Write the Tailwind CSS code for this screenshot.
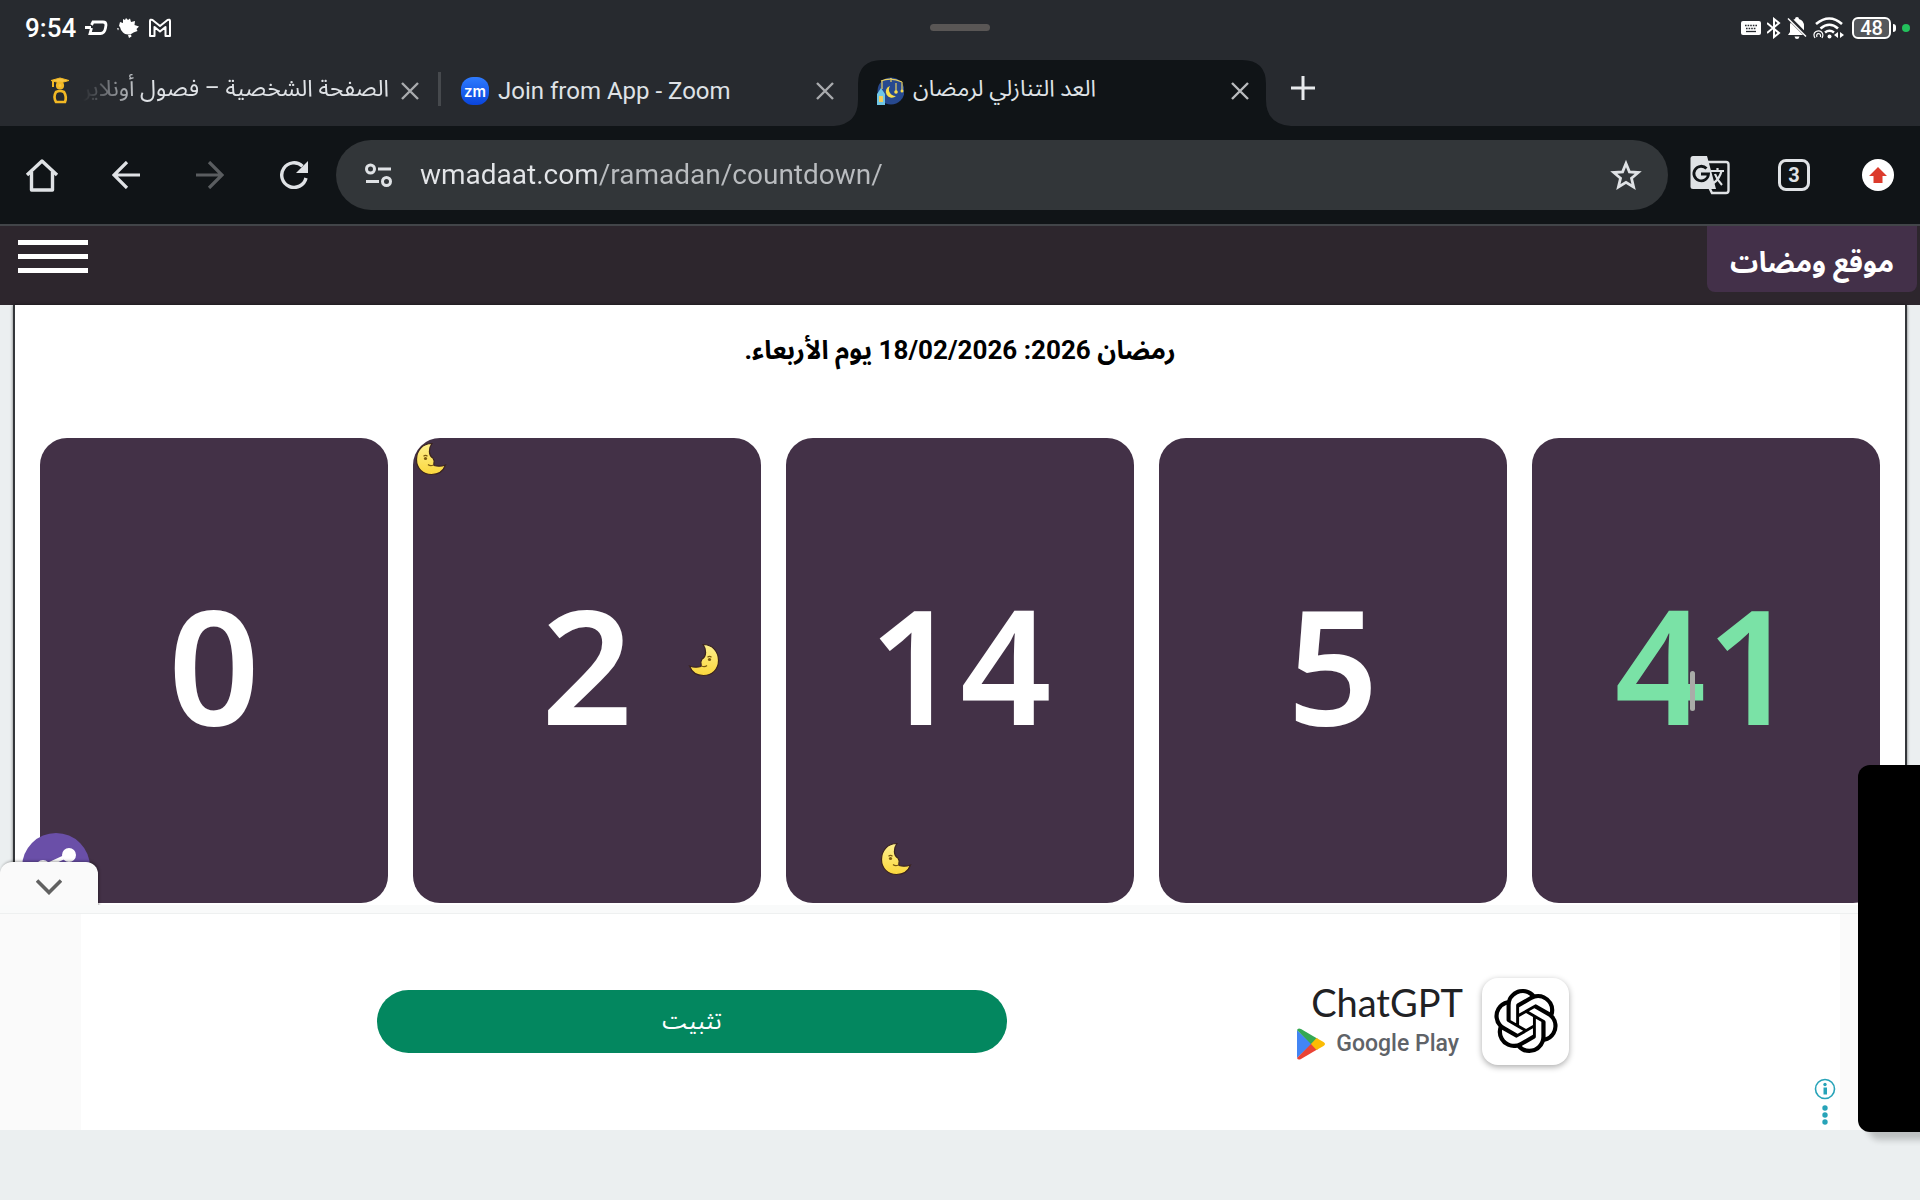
<!DOCTYPE html>
<html lang="ar">
    <head>
        <meta charset="UTF-8">
        <meta name="viewport" content="width=device-width, initial-scale=1.0">
        <title>العد التنازلي لرمضان</title>
        <script src="https://cdn.jsdelivr.net/npm/@tailwindcss/browser@4"></script>
    </head>
    <body class="h-screen flex flex-col overflow-hidden bg-[#ebeff0] font-['Roboto','Noto_Sans_Arabic','DejaVu_Sans',sans-serif]">
        <!-- Shared moon drawing -->
        <svg class="absolute h-0 w-0">
            <defs>
                <linearGradient id="moonFill" x1="0" y1="0" x2="0" y2="1">
                    <stop offset="0" stop-color="#fdf08f"/>
                    <stop offset="1" stop-color="#fbd73c"/>
                </linearGradient>
                <symbol id="moon" viewBox="0 0 32 34">
                    <path d="M17 1.500C7 1.500 1.500 9 1.500 17.500c0 9 6.500 15 15 15 7 0 12-4 14-9.500-4 1.500-8 1.500-11.500.5-.8-1 .5-1.500-.2-2.500 1-.8 0-1.500.3-2.300l-1-2.400c-5-3-4.500-10.500-1.100-14.800z" fill="url(#moonFill)" stroke="#3a2320" stroke-width="1.200"/>
                    <circle cx="10.500" cy="16.500" r="1.600" fill="#7a5a10"/>
                    <path d="M8.500 14.200q2-1.500 4 0M13 22.500q2 1.800 5 .8" fill="none" stroke="#7a5a10" stroke-width="1.200"/>
                </symbol>
            </defs>
        </svg>

        <!-- Status Bar -->
        <div class="relative flex h-[56px] shrink-0 items-center justify-between bg-[#272a2f] pl-[25px] pr-[10px] text-white">
            <div class="flex items-center gap-2">
                <span class="text-[26px] font-medium leading-none">9:54</span>
                <svg class="h-4 w-6" viewBox="0 0 24 16" fill="none" stroke="currentColor" stroke-width="2.800">
                    <path d="M1 7.500h6M7.500 5 9 2h10q3 0 3 3l-.5 3q-1 5.500-5 5.500H6L7.500 8"/>
                </svg>
                <svg class="h-6 w-6" viewBox="0 0 24 24" fill="currentColor">
                    <path d="M10 2l2 2 2-1.500L15 6l4-1-.5 4 4.500 1.500-2.500 2.500 1 2-4 1.500C15 19 9 19 7 16.500L5 14l-1-3-1-1 1-4 3 1V3l2 1zM12 19l3-.5.500 2-2.500 1.500zM1 12l2 .5-1 2z"/>
                </svg>
                <svg class="h-5 w-6" viewBox="0 0 24 20" fill="none" stroke="currentColor" stroke-width="2" stroke-linejoin="round">
                    <path d="M2 18V3q0-2 2.500-1L12 8l7.500-6Q22 1 22 3v15h-4.500V9L12 13.500 6.500 9v9z"/>
                </svg>
            </div>
            <div class="absolute left-1/2 top-6 h-[7px] w-[60px] -translate-x-1/2 rounded-full bg-[#595655]"></div>
            <div class="flex items-center gap-[6px]">
                <svg class="h-[14px] w-5" viewBox="0 0 20 14">
                    <rect width="20" height="14" rx="2" fill="#fff"/>
                    <path d="M4 4.500h12M5 7.500h10" stroke="#272a2f" stroke-width="1.600" stroke-dasharray="1.600 1"/>
                    <path d="M5 10.500h10" stroke="#272a2f" stroke-width="1.300"/>
                </svg>
                <svg class="h-[22px] w-[14px]" viewBox="0 0 14 22" fill="none" stroke="currentColor" stroke-width="2">
                    <path d="M0 6l12 10-5 4V2l5 4L0 16"/>
                </svg>
                <svg class="h-[22px] w-5" viewBox="0 0 20 22">
                    <path d="M10 0q2 0 2 2 5 1.500 5 7v6l2 3H1l2-3V9q0-5.500 5-7 0-2 2-2zM7.500 19.500h5q-.5 2.500-2.500 2.500t-2.500-2.500z" fill="#fff"/>
                    <path d="M2 1l18 18" stroke="#272a2f" stroke-width="4"/>
                    <path d="M1 1.500l18 18" stroke="#fff" stroke-width="1.500"/>
                </svg>
                <svg class="h-[22px] w-[31px]" viewBox="0 0 31 22" fill="none" stroke="#fff">
                    <path d="M3 7q13.500-11 26 0M7.500 11.500q9-7.500 17.500 0M12 15.500q4.500-3.500 9 0" stroke-width="2.600"/>
                    <circle cx="16.500" cy="19.500" r="2" fill="#fff" stroke="none"/>
                    <path d="M2 21q-2.500-4.500 1-6.500 3-1.500 5.500.5 2.500 2.500.5 6M4 20q-1-2.500 1-3.500 3 0 2.500 3.500" stroke-width="1.200"/>
                    <path d="M25 15v6l-4-3zM27 15v6l4-3z" fill="#fff" stroke="none"/>
                </svg>
                <div class="ml-[2px] flex items-center gap-[2px]">
                    <div class="flex h-[22px] w-[39px] items-center justify-center rounded-md border-2 border-white bg-[#55585c] text-[20px] font-medium leading-none">48</div>
                    <div class="h-2 w-[3px] rounded-r bg-white"></div>
                </div>
                <div class="h-2 w-2 rounded-full bg-[#23c15c]"></div>
            </div>
        </div>

        <!-- Tab Strip -->
        <div class="flex h-[70px] shrink-0 items-end bg-[#272a2f] pl-[26px] text-[24px] text-[#dfe2e6]">
            <div class="flex h-[66px] w-[415px] items-center gap-[9px] pb-1 pl-[20px] pr-[19px]">
                <svg class="h-7 w-7 shrink-0" viewBox="0 0 28 28" fill="none" stroke="#f2b824" stroke-width="2.600">
                    <path d="M5 3.500 14 1l9 2.500L14 6z" fill="#f7c544" stroke-width="1"/>
                    <path d="M7 4v6" stroke-width="2"/>
                    <circle cx="14" cy="8.500" r="2.800" fill="#f7c544"/>
                    <path d="M10 15q4-2 8 0 3 5 1 10h-9q-3-5 0-10z"/>
                </svg>
                <span dir="rtl" class="min-w-0 flex-1 overflow-hidden whitespace-nowrap pb-1 text-[23px] mask-l-from-80% mask-l-to-100%">الصفحة الشخصية – فصول أونلاين</span>
                <button aria-label="Close tab" class="shrink-0 text-[#a9abae]">
                    <svg class="h-6 w-6" viewBox="0 0 24 24" fill="none" stroke="currentColor" stroke-width="2.400"><path d="M4 4l16 16M20 4 4 20"/></svg>
                </button>
            </div>
            <div class="relative flex h-[66px] w-[415px] items-center gap-[9px] pb-1 pl-[20px] pr-[19px]">
                <div class="absolute -left-[3px] top-3 h-[34px] w-[3px] bg-[#46494d]"></div>
                <div class="flex h-7 w-7 shrink-0 items-center justify-center rounded-xl bg-linear-to-b from-[#2f7bff] to-[#0a44dc] font-['Inter'] text-[15px] font-semibold leading-none text-white">zm</div>
                <span class="min-w-0 flex-1 whitespace-nowrap">Join from App - Zoom</span>
                <button aria-label="Close tab" class="shrink-0 text-[#a9abae]">
                    <svg class="h-6 w-6" viewBox="0 0 24 24" fill="none" stroke="currentColor" stroke-width="2.400"><path d="M4 4l16 16M20 4 4 20"/></svg>
                </button>
            </div>
            <div class="relative flex h-[66px] w-[415px] items-center gap-[9px] pb-1 pl-[20px] pr-[19px]">
                <!-- Active tab shape, flares out at the foot -->
                <svg class="absolute -left-[22px] top-0 h-[66px] w-[457px]" viewBox="0 0 457 66" fill="#101417">
                    <path d="M0 66q24-2 24-26V24Q24 0 48 0h360q24 0 24 24v16q0 24 25 26z"/>
                </svg>
                <svg class="relative h-7 w-7 shrink-0" viewBox="0 0 28 28">
                    <circle cx="15" cy="14" r="13.500" fill="#27498f"/>
                    <path d="M14 9a6 6 0 1 0 6 10 6.500 6.500 0 0 1-6-10z" fill="#f8dc4c"/>
                    <path d="M5 4q10-4 21 1M6 3v9M15 1v4M26 5v9M20 6v8" fill="none" stroke="#e8cf62" stroke-width="1.200"/>
                    <circle cx="20" cy="15" r="1.800" fill="#f8dc4c"/>
                    <circle cx="26" cy="14" r="1.500" fill="#f8dc4c"/>
                    <path d="M1 28V17l4-6 4 6v11z" fill="#6fc6e6"/>
                    <path d="M3 19h4v6H3z" fill="#f2cd5c"/>
                </svg>
                <span dir="rtl" class="relative whitespace-nowrap pb-1 text-[23px]">العد التنازلي لرمضان</span>
                <button aria-label="Close tab" class="relative ml-auto shrink-0 text-[#b9bbbe]">
                    <svg class="h-6 w-6" viewBox="0 0 24 24" fill="none" stroke="currentColor" stroke-width="2.400"><path d="M4 4l16 16M20 4 4 20"/></svg>
                </button>
            </div>
            <button aria-label="New tab" class="mb-[26px] ml-[20px] text-[#e8eaed]">
                <svg class="h-6 w-6" viewBox="0 0 24 24" stroke="currentColor" stroke-width="3"><path d="M12 0v24M0 12h24"/></svg>
            </button>
        </div>

        <!-- Browser Toolbar -->
        <div class="flex h-[100px] shrink-0 items-center border-b-2 border-[#424549] bg-[#101417] text-[#dfe2e5]">
            <button aria-label="Home" class="flex w-[84px] justify-center">
                <svg class="h-9 w-9" viewBox="0 0 36 36" fill="none" stroke="currentColor" stroke-width="3.400" stroke-linejoin="round">
                    <path d="M3 18 18 4l15 14M7.500 15v18h21V15"/>
                </svg>
            </button>
            <button aria-label="Back" class="flex w-[84px] justify-center">
                <svg class="h-7 w-7" viewBox="0 0 28 28" fill="none" stroke="currentColor" stroke-width="3.200"><path d="M28 14H2M15 1 2 14l13 13"/></svg>
            </button>
            <button aria-label="Forward" class="flex w-[84px] justify-center text-[#5a5d60]">
                <svg class="h-7 w-7" viewBox="0 0 28 28" fill="none" stroke="currentColor" stroke-width="3.200"><path d="M0 14h26M13 1l13 13-13 13"/></svg>
            </button>
            <button aria-label="Reload" class="flex w-[84px] justify-center">
                <svg class="h-7 w-7" viewBox="0 0 28 28">
                    <path d="M26 17A12.300 12.300 0 1 1 22.500 5.200" fill="none" stroke="currentColor" stroke-width="3.400"/>
                    <path d="M28 0v12H16z" fill="currentColor"/>
                </svg>
            </button>
            <div class="flex h-[70px] flex-1 items-center rounded-full bg-[#323639] pl-[29px] pr-[26px]">
                <svg class="h-6 w-7 shrink-0" viewBox="0 0 28 24" fill="none" stroke="currentColor" stroke-width="3">
                    <circle cx="5.500" cy="6" r="4"/><path d="M13 6h13M1 18.500h13"/><circle cx="21.500" cy="18.500" r="4"/>
                </svg>
                <input aria-label="Address" type="text" dir="ltr" value="wmadaat.com/ramadan/countdown/" class="ml-[27px] min-w-0 flex-1 bg-[linear-gradient(90deg,#e3e5e8_176px,#b9bcbf_176px)] bg-clip-text text-[28px] text-transparent outline-none">
                <button aria-label="Bookmark">
                    <svg class="h-8 w-8" viewBox="0 0 32 32" fill="none" stroke="currentColor" stroke-width="2.800">
                        <path d="M16 4.500l3.400 8.300 8.900.7-6.800 5.800 2.100 8.700-7.600-4.700L8.400 28l2.100-8.700-6.800-5.800 8.900-.7z"/>
                    </svg>
                </button>
            </div>
            <button aria-label="Translate" class="flex w-[84px] justify-center">
                <svg class="h-10 w-10" viewBox="0 0 40 40">
                    <path d="M18 7h18q2.500 0 2.500 2.500v26Q38.500 38 36 38H22l-4-8" fill="none" stroke="currentColor" stroke-width="2.400"/>
                    <path d="M3 1h14l9 33H3q-2.500 0-2.500-2.500v-28Q.5 1 3 1z" fill="currentColor"/>
                    <path d="M16.500 13.500A7.300 7.300 0 1 0 18.500 19H11" fill="none" stroke="#101417" stroke-width="2.800"/>
                    <path d="M21 16h13M27.500 13v3M31.500 16q-2 8-8 12M25 19q2 6 7 11" fill="none" stroke="currentColor" stroke-width="2.200"/>
                </svg>
            </button>
            <button aria-label="Open tabs" class="flex w-[84px] justify-center">
                <span class="flex h-8 w-8 items-center justify-center rounded-lg border-3 border-current text-[20px] font-bold leading-none">3</span>
            </button>
            <button aria-label="Update" class="flex w-[84px] justify-center">
                <svg class="h-8 w-8" viewBox="0 0 32 32">
                    <circle cx="16" cy="16" r="16" fill="#fff"/>
                    <path d="M16 8l9 9h-4.500v7h-9v-7H7z" fill="#dc3b2c"/>
                </svg>
            </button>
        </div>

        <!-- Site Header -->
        <header class="flex h-[79px] shrink-0 items-start justify-between bg-[#2d262d] pl-[18px] pr-[3px]">
            <button aria-label="القائمة" class="mt-[14px] flex w-[70px] flex-col gap-[9px]">
                <span class="h-[5px] w-full bg-white"></span>
                <span class="h-[5px] w-full bg-white"></span>
                <span class="h-[5px] w-full bg-white"></span>
            </button>
            <a href="#" dir="rtl" class="flex h-[66px] w-[210px] items-center justify-center rounded-b-lg bg-[#433049] pt-2 text-[28px] font-bold text-white">موقع ومضات</a>
        </header>

        <!-- Countdown -->
        <main class="relative mx-[13px] flex min-h-0 flex-1 flex-col border-x-2 border-[#34373a] bg-white px-[25px] shadow-[0_0_3px_#0008]">
            <h1 dir="rtl" class="flex h-[133px] items-center justify-center pb-[42px] text-[26px] font-bold text-black">رمضان 2026: 18/02/2026 يوم الأربعاء.</h1>
            <div class="grid flex-1 grid-cols-5 gap-[25px] pb-[2px] font-['Liberation_Sans_Narrow','Noto_Sans',sans-serif] text-[160px] font-semibold leading-none text-white">
                <div class="flex items-center justify-center rounded-[27px] bg-[#433147] pb-4">0</div>
                <div class="relative flex items-center justify-center rounded-[27px] bg-[#433147] pb-4">
                    2
                    <svg class="absolute left-[2px] top-1 h-[34px] w-8"><use href="#moon"/></svg>
                    <svg class="absolute left-[275px] top-[205px] h-[34px] w-8 -scale-x-100"><use href="#moon"/></svg>
                </div>
                <div class="relative flex items-center justify-center rounded-[27px] bg-[#433147] pb-4">
                    14
                    <svg class="absolute bottom-[27px] left-[94px] h-[34px] w-8"><use href="#moon"/></svg>
                </div>
                <div class="flex items-center justify-center rounded-[27px] bg-[#433147] pb-4">5</div>
                <div class="relative flex items-center justify-center rounded-[27px] bg-[#433147] pb-4 text-[#7ae2a6]">
                    41
                    <div class="absolute left-[158px] top-[233px] h-10 w-[5px] rounded-full bg-[#a9aca8]"></div>
                </div>
            </div>
            <!-- Share -->
            <button aria-label="مشاركة" class="absolute -bottom-1 left-[7px] flex h-[76px] w-[68px] items-start justify-center overflow-hidden">
                <svg class="h-[68px] w-[68px]" viewBox="0 0 68 68" fill="none" stroke="#fff" stroke-width="4">
                    <circle cx="34" cy="34" r="34" fill="#6a4fa8" stroke="none"/>
                    <path d="M47 22 21 34l26 12"/>
                    <circle cx="47" cy="22" r="5" fill="#fff"/><circle cx="21" cy="34" r="5" fill="#fff"/><circle cx="47" cy="46" r="5" fill="#fff"/>
                </svg>
            </button>
        </main>

        <!-- Anchor Ad -->
        <aside class="relative h-[225px] shrink-0 bg-[#fafafa]">
            <button aria-label="إخفاء الإعلان" class="absolute -top-[43px] left-0 flex h-[46px] w-[98px] items-center justify-center rounded-t-xl bg-[#fafafa] pt-1 text-[#616161] shadow-[1px_-1px_3px_#0005] [clip-path:inset(-4px_-4px_3px_0)]">
                <svg class="h-4 w-[26px]" viewBox="0 0 26 16" fill="none" stroke="currentColor" stroke-width="3.600"><path d="M1 1.500 13 13.500l12-12"/></svg>
            </button>
            <div class="h-[9px] border-b border-[#eef0f0] bg-[#f9fafa]"></div>
            <div class="relative ml-[81px] mr-[80px] flex h-[216px] items-center justify-between bg-white pb-[2px] pl-[296px] pr-[271px]">
                <button class="h-[63px] w-[630px] rounded-full bg-[#03875f] text-[24px] text-white">تثبيت</button>
                <div class="flex items-center gap-[19px]">
                    <div class="flex flex-col items-end">
                        <span class="mb-[6px] text-[38px] leading-[40px] text-[#202124] font-['Lato']">ChatGPT</span>
                        <div class="flex items-center gap-[10px] pr-1">
                            <svg class="h-8 w-[30px]" viewBox="0 0 30 32">
                                <path d="M1 2v28l15-14z" fill="#4285f4"/>
                                <path d="M1 2Q2-.5 5 1l17 10-6 6z" fill="#34a853"/>
                                <path d="M1 30q1 2.500 4 1l17-10-6-6z" fill="#ea4335"/>
                                <path d="M20.500 10l7 4q3 2 0 4l-7 4-5.500-6z" fill="#fbbc04"/>
                            </svg>
                            <span class="text-[23px] font-medium leading-8 text-[#5f6368]">Google Play</span>
                        </div>
                    </div>
                    <div class="flex h-[87px] w-[87px] items-center justify-center rounded-2xl bg-white shadow-[0_2px_6px_#0005]">
                        <svg class="h-16 w-16" viewBox="0 0 24 24" fill="#000">
                            <path d="M22.2819 9.8211a5.9847 5.9847 0 0 0-.5157-4.9108 6.0462 6.0462 0 0 0-6.5098-2.9A6.0651 6.0651 0 0 0 4.9807 4.1818a5.9847 5.9847 0 0 0-3.9977 2.9 6.0462 6.0462 0 0 0 .7427 7.0966 5.98 5.98 0 0 0 .511 4.9107 6.051 6.051 0 0 0 6.5146 2.9001A5.9847 5.9847 0 0 0 13.2599 24a6.0557 6.0557 0 0 0 5.7718-4.2058 5.9894 5.9894 0 0 0 3.9977-2.9001 6.0557 6.0557 0 0 0-.7475-7.0729zm-9.022 12.6081a4.4755 4.4755 0 0 1-2.8764-1.0408l.1419-.0804 4.7783-2.7582a.7948.7948 0 0 0 .3927-.6813v-6.7369l2.02 1.1686a.071.071 0 0 1 .038.052v5.5826a4.504 4.504 0 0 1-4.4945 4.4944zm-9.6607-4.1254a4.4708 4.4708 0 0 1-.5346-3.0137l.142.0852 4.783 2.7582a.7712.7712 0 0 0 .7806 0l5.8428-3.3685v2.3324a.0804.0804 0 0 1-.0332.0615L9.74 19.9502a4.4992 4.4992 0 0 1-6.1408-1.6464zM2.3408 7.8956a4.485 4.485 0 0 1 2.3655-1.9728V11.6a.7664.7664 0 0 0 .3879.6765l5.8144 3.3543-2.0201 1.1685a.0757.0757 0 0 1-.071 0l-4.8303-2.7865A4.504 4.504 0 0 1 2.3408 7.872zm16.5963 3.8558L13.1038 8.364 15.1192 7.2a.0757.0757 0 0 1 .071 0l4.8303 2.7913a4.4944 4.4944 0 0 1-.6765 8.1042v-5.6772a.79.79 0 0 0-.407-.667zm2.0107-3.0231l-.142-.0852-4.7735-2.7818a.7759.7759 0 0 0-.7854 0L9.409 9.2297V6.8974a.0662.0662 0 0 1 .0284-.0615l4.8303-2.7866a4.4992 4.4992 0 0 1 6.6802 4.66zM8.3065 12.863l-2.02-1.1638a.0804.0804 0 0 1-.038-.0567V6.0742a4.4992 4.4992 0 0 1 7.3757-3.4537l-.142.0805L8.704 5.459a.7948.7948 0 0 0-.3927.6813zm1.0976-2.3654l2.602-1.4998 2.6069 1.4998v2.9994l-2.5974 1.4997-2.6067-1.4997Z"/>
                        </svg>
                    </div>
                </div>
                <button aria-label="خيارات الإعلان" class="absolute bottom-1 right-1">
                    <svg class="h-12 w-[22px]" viewBox="0 0 22 48" fill="#27a3b8">
                        <circle cx="11" cy="11" r="9.500" fill="none" stroke="#27a3b8" stroke-width="1.600"/>
                        <circle cx="11" cy="6.500" r="1.700"/><path d="M9.500 9.500h3.500v7H9.500z"/>
                        <circle cx="11" cy="30" r="2.700"/><circle cx="11" cy="37" r="2.700"/><circle cx="11" cy="44" r="2.700"/>
                    </svg>
                </button>
            </div>
        </aside>
        <footer class="h-[70px] shrink-0 bg-[#ebeff0]"></footer>

        <!-- Floating side panel -->
        <div class="fixed bottom-[68px] right-0 h-[367px] w-[62px] rounded-l-xl bg-black shadow-[10px_8px_6px_#0003]"></div>
    </body>
</html>
